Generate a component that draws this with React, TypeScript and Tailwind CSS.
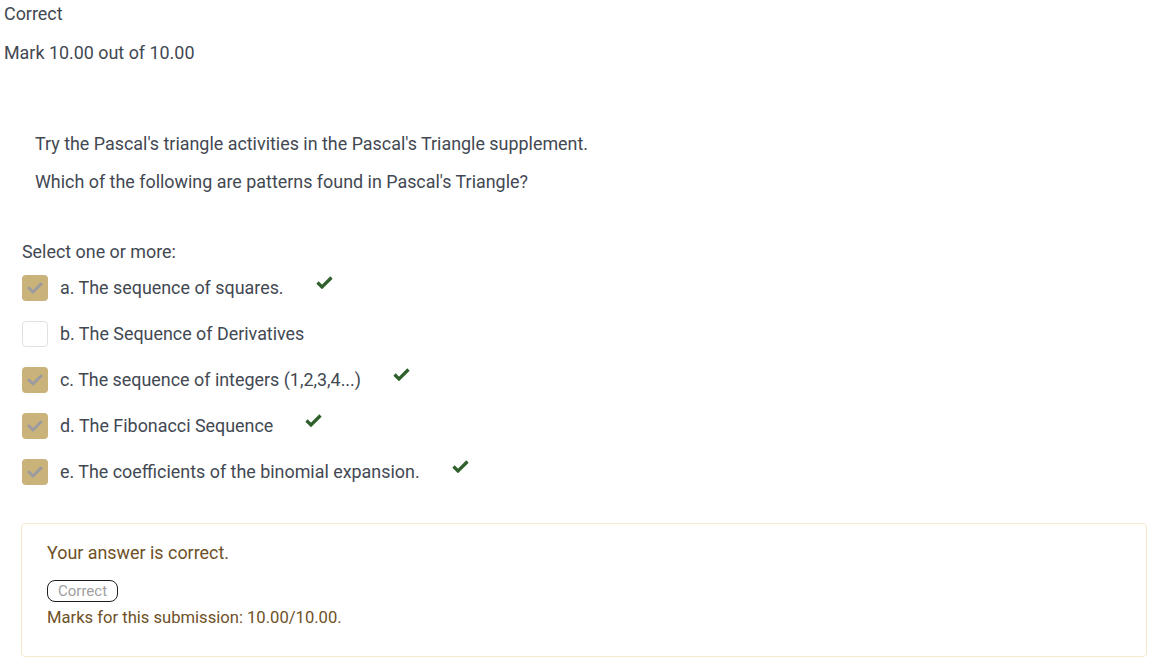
import React from 'react';

const options = [
  { label: 'a. The sequence of squares.', checked: true },
  { label: 'b. The Sequence of Derivatives', checked: false },
  { label: 'c. The sequence of integers (1,2,3,4...)', checked: true },
  { label: 'd. The Fibonacci Sequence', checked: true },
  { label: 'e. The coefficients of the binomial expansion.', checked: true },
];

function GreenTick() {
  return (
    <svg width="17" height="13" viewBox="0 0 17 13" className="ml-8 -mt-3 shrink-0">
      <path d="M1.5 6.5 L6 11 L15.5 1.5" fill="none" stroke="#2f5f2a" strokeWidth="3.2" strokeLinejoin="miter" />
    </svg>
  );
}

function Box({ checked }: { checked: boolean }) {
  if (!checked) {
    return <div className="w-[26px] h-[26px] rounded-[4px] border border-[#dee2e6] bg-white shrink-0" />;
  }
  return (
    <div className="w-[26px] h-[26px] rounded-[4px] bg-[#c9b37a] flex items-center justify-center shrink-0">
      <svg width="16" height="12" viewBox="0 0 16 12">
        <path d="M2 6 L6 10 L14 2" fill="none" stroke="#9b9ba0" strokeWidth="3" strokeLinecap="round" strokeLinejoin="round" />
      </svg>
    </div>
  );
}

export default function App() {
  return (
    <div className="bg-white w-[1158px] h-[666px] overflow-hidden text-[17.9px] text-[#424852] font-['Roboto',sans-serif]">
      {/* State */}
      <div className="px-1 pt-[2px]">
        <div className="leading-6">Correct</div>
        <div className="leading-6 mt-[15px]">Mark 10.00 out of 10.00</div>
      </div>

      {/* Question text */}
      <div className="pl-[35px] pt-[67px]">
        <p className="leading-6">Try the Pascal's triangle activities in the Pascal's Triangle supplement.</p>
        <p className="leading-6 mt-[14px]">Which of the following are patterns found in Pascal's Triangle?</p>
      </div>

      {/* Answers */}
      <div className="pl-[22px] pt-[46px]">
        <div className="leading-6">Select one or more:</div>
        <div className="flex flex-col gap-5 mt-[11px]">
          {options.map((o) => (
            <div key={o.label} className="flex items-center h-[26px]">
              <Box checked={o.checked} />
              <span className="ml-3 leading-6">{o.label}</span>
              {o.checked && <GreenTick />}
            </div>
          ))}
        </div>
      </div>

      {/* Feedback */}
      <div className="ml-[21px] mr-[11px] mt-[38px] h-[134px] border border-[#f6e9cf] rounded-[4px] px-[25px] pt-[17px] text-[#6e5127]">
        <div className="leading-6">Your answer is correct.</div>
        <div className="mt-[15px] inline-block border-[1.5px] border-[#1f1f1f] rounded-[8px] px-[10px] text-[15px] leading-[20px] text-[#a0a0a0]">
          Correct
        </div>
        <div className="leading-6 mt-[2px] text-[16.6px]">Marks for this submission: 10.00/10.00.</div>
      </div>
    </div>
  );
}
